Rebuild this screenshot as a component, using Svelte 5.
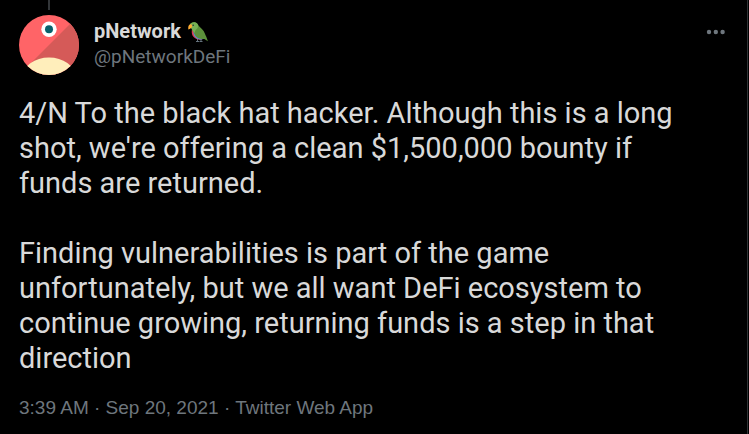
<script>
  const name = 'pNetwork';
  const handle = '@pNetworkDeFi';
  const paragraphs = [
    "4/N To the black hat hacker. Although this is a long shot, we're offering a clean $1,500,000 bounty if funds are returned.",
    'Finding vulnerabilities is part of the game unfortunately, but we all want DeFi ecosystem to continue growing, returning funds is a step in that direction'
  ];
</script>

<article class="tweet">
  <header>
    <div class="rail">
      <span class="thread"></span>
      <svg class="avatar" viewBox="0 0 60 60" role="img" aria-label="pNetwork avatar">
        <defs><clipPath id="disc"><circle cx="30" cy="30" r="30" /></clipPath></defs>
        <g clip-path="url(#disc)">
          <rect width="60" height="60" fill="#ff6467" />
          <path d="M60 0V60H0L51 9Z" fill="#d55a58" />
          <ellipse cx="30" cy="61" rx="26" ry="18.500" fill="#ffeebb" />
          <circle cx="30" cy="14.200" r="7.700" fill="#fff" />
          <circle cx="30" cy="14.200" r="4" fill="#08616c" />
        </g>
      </svg>
    </div>
    <div class="who">
      <a class="name" href="#profile">{name}
        <svg class="parrot" viewBox="0 0 20 20" aria-hidden="true">
          <path d="M9.500 17v2.500M8 19.500h3M13 17.500v2M11.500 19.500h3" stroke="#65727d" stroke-width="1" fill="none" />
          <path d="M4.300 6c-1 3-.8 7 1.300 9 1.800 2 5.400 3.300 8.300 2.500L13 10Z" fill="#dd3f55" />
          <path d="M5.500 10c-.2 5 4 8 9 7.500L12 9Z" fill="#5194df" />
          <path d="M1.700 3C2.900-.2 7.800-.5 9.700 2.200c1.200 2 2.400 3 4.200 4.700 2.800 2.700 3.300 6 4.500 8.200l1.500 4.100-3.500-2.200c-4.400.4-8.500-1.300-9.700-4.600C5.900 9.800 3.300 7.500 1.700 3Z" fill="#5c913b" />
          <path d="M1.700 3C2.900-.2 7.800-.5 9.700 2.200c.8 1.700.3 4-1.500 5.200-1.200 1-1.400 2.400-1.500 3.600C4.500 9.300 3.600 6 1.700 3Z" fill="#77b255" />
          <path d="M3 2.200C.8 2.400-.2 4.200.4 7.500 2 7 3.900 6 4.100 4.300 4.200 3.300 3.800 2.500 3 2.200Z" fill="#ffac33" />
          <circle cx="5.200" cy="3.300" r=".8" fill="#292f33" />
        </svg>
      </a>
      <a class="handle" href="#profile">{handle}</a>
    </div>
    <button class="more" aria-label="More">
      <svg viewBox="0 0 20 6" aria-hidden="true">
        <circle cx="3" cy="3" r="2.200" /><circle cx="9.800" cy="3" r="2.200" /><circle cx="16.600" cy="3" r="2.200" />
      </svg>
    </button>
  </header>
  <div class="body">
    {#each paragraphs as text}
      <p>{text}</p>
    {/each}
  </div>
  <footer>
    <a href="#status">3:39 AM · Sep 20, 2021</a> · <a href="#source">Twitter Web App</a>
  </footer>
</article>

<style>
  :global(body) {
    background: #000;
  }
  .tweet {
    box-sizing: border-box;
    min-height: 100vh;
    margin-right: 1px;
    padding: 0 21px 14px 19px;
    border-right: 1px solid #2f3336;
    background: #000;
    color: #d9d9d9;
    font-family: Roboto, 'Liberation Sans', sans-serif;
  }
  a {
    color: inherit;
    text-decoration: none;
  }
  header {
    display: flex;
  }
  .rail {
    display: flex;
    flex-direction: column;
    align-items: center;
  }
  .thread {
    width: 2px;
    height: 10px;
    margin-bottom: 5px;
    background: #333639;
  }
  .avatar {
    display: block;
    width: 60px;
    height: 60px;
  }
  .who {
    flex: 1;
    display: flex;
    flex-direction: column;
    align-items: flex-start;
    margin-left: 15px;
    padding-top: 19px;
    font-size: 19px;
    line-height: 25px;
  }
  .name {
    display: flex;
    align-items: center;
    gap: 7px;
    font-size: 20px;
    font-weight: 700;
  }
  .parrot {
    width: 20px;
    height: 20px;
  }
  .handle,
  footer {
    color: #6e767d;
  }
  .more {
    align-self: flex-start;
    margin-top: 29px;
    padding: 0;
    border: 0;
    background: none;
    color: #6e767d;
  }
  .more svg {
    display: block;
    width: 20px;
    height: 6px;
    fill: currentColor;
  }
  .body {
    display: flex;
    flex-direction: column;
    gap: 35px;
    margin-top: 21px;
    padding-right: 24px;
    font-size: 29px;
    line-height: 35px;
  }
  p {
    margin: 0;
  }
  footer {
    margin-top: 19px;
    font-family: 'Liberation Sans', Arial, sans-serif;
    font-size: 19px;
    line-height: 25px;
  }
</style>
